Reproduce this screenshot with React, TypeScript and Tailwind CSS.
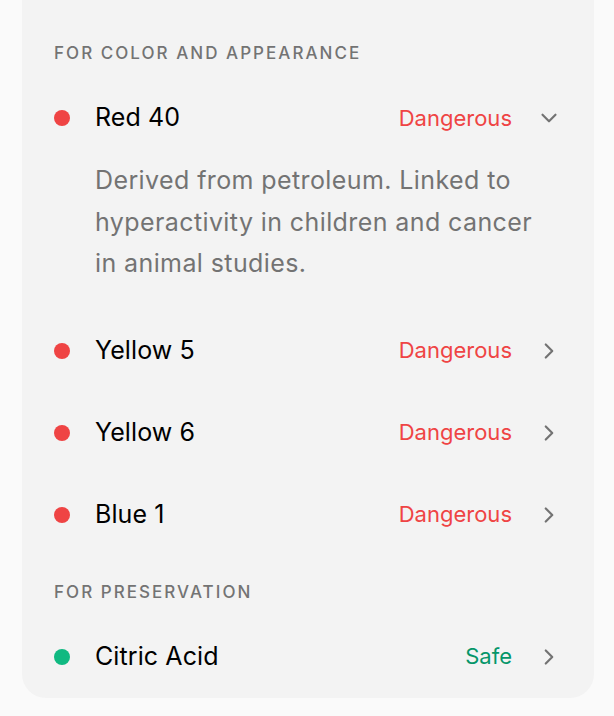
const sections = [
  {
    title: "For color and appearance",
    items: [
      {
        name: "Red 40",
        status: "Dangerous",
        safe: false,
        open: true,
        note: "Derived from petroleum. Linked to hyperactivity in children and cancer in animal studies.",
      },
      { name: "Yellow 5", status: "Dangerous", safe: false },
      { name: "Yellow 6", status: "Dangerous", safe: false },
      { name: "Blue 1", status: "Dangerous", safe: false },
    ],
  },
  {
    title: "For preservation",
    items: [{ name: "Citric Acid", status: "Safe", safe: true }],
  },
];

type Item = {
  name: string;
  status: string;
  safe: boolean;
  open?: boolean;
  note?: string;
};

function Chevron({ open }: { open?: boolean }) {
  return (
    <svg
      width="26"
      height="26"
      viewBox="0 0 24 24"
      fill="none"
      stroke="#737373"
      strokeWidth="2"
      strokeLinecap="round"
      strokeLinejoin="round"
    >
      {open ? <path d="M6 9l6 6 6-6" /> : <path d="M9 6l6 6-6 6" />}
    </svg>
  );
}

function Row({ item }: { item: Item }) {
  return (
    <div>
      <div className="flex h-[82px] items-center">
        <span
          className={`size-4 shrink-0 rounded-full ${item.safe ? "bg-[#10b981]" : "bg-[#ef4444]"}`}
        />
        <span className="ml-[25px] flex-1 text-[25px] tracking-[0.1px] text-black">{item.name}</span>
        <span
          className={`text-[22px] ${item.safe ? "text-[#059669]" : "text-[#ef4444]"}`}
        >
          {item.status}
        </span>
        <span className="ml-[24px] flex size-[26px] items-center justify-center">
          <Chevron open={item.open} />
        </span>
      </div>
      {item.open && item.note && (
        <p className="max-w-[491px] pb-[25px] pl-[41px] pt-[1px] text-[25px] leading-[41.5px] tracking-[0.4px] text-[#737373]">
          {item.note}
        </p>
      )}
    </div>
  );
}

export default function App() {
  return (
    <div
      className="min-h-[716px] bg-[#fafafa] pl-[22px] pr-[20px] pb-[20px]"
      style={{ fontFamily: "Inter, 'Noto Sans', sans-serif" }}
    >
      <div className="rounded-b-[24px] bg-[#f3f3f3] px-[32px] pt-[43px]">
        {sections.map((s, i) => (
          <div key={s.title} className={i > 0 ? "pt-[26px]" : ""}>
            <h3 className="mb-[14px] text-[17px] font-medium uppercase leading-[20px] tracking-[0.12em] text-[#737373]">
              {s.title}
            </h3>
            {s.items.map((it) => (
              <Row key={it.name} item={it} />
            ))}
          </div>
        ))}
      </div>
    </div>
  );
}
